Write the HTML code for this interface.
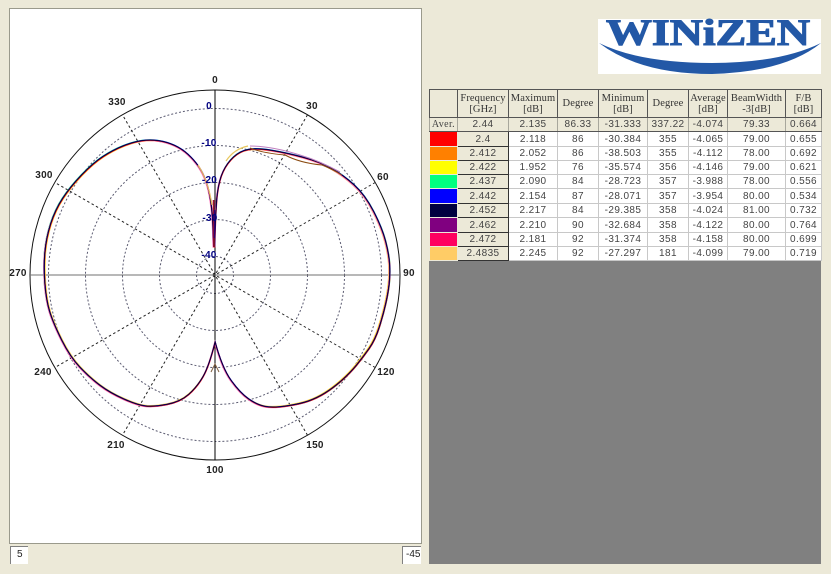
<!DOCTYPE html>
<html>
<head>
<meta charset="utf-8">
<style>
html,body{margin:0;padding:0}
body{width:831px;height:574px;background:#ece9d8;position:relative;overflow:hidden;font-family:"Liberation Sans",sans-serif}
#plot{position:absolute;left:9px;top:8px;width:411px;height:534px;background:#fff;border:1px solid #9a9a8c}
svg{position:absolute;left:0;top:0}
.box{position:absolute;background:#fff;border-left:1px solid #808080;border-top:1px solid #808080;font-size:10px;line-height:16px;color:#222;box-sizing:border-box;height:18px;top:546px}
#gray{position:absolute;left:429px;top:89px;width:392px;height:475px;background:#808080}
table{position:absolute;left:429px;top:89px;border-collapse:collapse;table-layout:fixed;width:392px;background:#fff}
td{padding:0;text-align:center;border:1px solid #c8c8c8;font-size:10px;letter-spacing:.4px;color:#444;line-height:11px;overflow:hidden;white-space:nowrap}
tr.h td{background:#ece9d8;border-color:#555;font-family:"Liberation Serif",serif;font-size:10.5px;line-height:11px;letter-spacing:.1px;color:#333}
tr.a td{background:#ece9d8;border-color:#555 #a8a79c #555 #a8a79c;color:#444}
td.f{background:#ece9d8;border:1px solid #333}
td.c{border:1px solid #ece9d8}
</style>
</head>
<body>
<div id="plot"></div>
<svg width="831" height="574" viewBox="0 0 831 574">
<defs>
<path id="p" fill="none" d="M213.5,247 L213,231 Q212.5,215 210.75,202.5 Q209,190 206,181.5 Q203,173 198.5,166.5 Q194,160 188,154.5 Q182,149 174.5,145.5 Q167,142 158.5,140.75 Q150,139.5 141.5,140.75 Q133,142 123,146 Q113,150 103,156.5 Q93,163 81.5,175 Q70,187 62.5,198.5 Q55,210 50.5,224 Q46,238 44.75,252.5 Q43.5,267 44.75,283.5 Q46,300 49.5,311.5 Q53,323 61.5,340 Q70,357 80,367.5 Q90,378 100,385.5 Q110,393 123.5,399 Q137,405 145,406 Q153,407 166.5,404.5 Q180,402 188.5,394.5 Q197,387 203,376.5 Q209,366 215,342 Q222,368 231,380.5 Q240,393 248.5,399 Q257,405 265,406.5 Q273,408 286.5,406 Q300,404 308.5,401 Q317,398 325,393 Q333,388 341.5,380.5 Q350,373 356.5,365 Q363,357 369,348.5 Q375,340 379,327.5 Q383,315 385.5,304 Q388,293 389,284 Q390,275 389.5,265 Q389,255 385.5,241.5 Q382,228 373.5,211.5 Q365,195 354,185 Q343,175 331.5,168.5 Q320,162 303.5,157.5 Q287,153 272,150.5 Q257,148 248.5,149.5 Q240,151 233.5,157 Q227,163 223,171.5 Q219,180 217.25,193.5 Q215.5,207 214.5,247"/>
</defs>
<g fill="none" stroke="#40405a" stroke-width="1" stroke-dasharray="2 2" opacity=".85">
<circle cx="215" cy="275" r="18.5"/>
<circle cx="215" cy="275" r="55.5"/>
<circle cx="215" cy="275" r="92.5"/>
<circle cx="215" cy="275" r="129.5"/>
<circle cx="215" cy="275" r="166.5"/>
</g>
<g stroke="#222" stroke-width="1" stroke-dasharray="2.5 2.5">
<line x1="307.5" y1="114.8" x2="122.5" y2="435.2"/>
<line x1="375.2" y1="182.5" x2="54.8" y2="367.5"/>
<line x1="375.2" y1="367.5" x2="54.8" y2="182.5"/>
<line x1="307.5" y1="435.2" x2="122.5" y2="114.8"/>
</g>
<circle cx="215" cy="275" r="185" fill="none" stroke="#111" stroke-width="1"/>
<line x1="215" y1="90" x2="215" y2="460" stroke="#000" stroke-width="1"/>
<line x1="30" y1="275" x2="400" y2="275" stroke="#707070" stroke-width="1"/>
<g stroke-width="1">
<use href="#p" stroke="#ffd070" transform="translate(215 275) scale(.994) translate(-215 -275)"/>
<use href="#p" stroke="#ffff00" transform="translate(215 275) scale(.996) translate(-215 -275)"/>
<use href="#p" stroke="#ff8000" transform="translate(215 275) scale(.998) translate(-215 -275)"/>
<use href="#p" stroke="#00e080" transform="translate(215 275) scale(1.003) translate(-215 -275)"/>
<use href="#p" stroke="#ff80c0" transform="translate(-.5 .6)"/>
<use href="#p" stroke="#ff0000" transform="translate(.4 .3)"/>
<use href="#p" stroke="#0000ff" transform="translate(.2 -.3)"/>
<use href="#p" stroke="#800080"/>
<use href="#p" stroke="#000030" stroke-width=".9" transform="translate(.1 -.1)"/>
</g>
<path d="M250,148 Q262,153 285,155 Q300,163 322,165 Q332,169 342,175" fill="none" stroke="#8a4a10" stroke-width="1"/>
<path d="M250,146 Q272,146 300,155 Q320,161 340,172" fill="none" stroke="#c080c0" stroke-width="1"/>
<path d="M226,161 Q234,149 248,146" fill="none" stroke="#e8c860" stroke-width="1.2"/>
<path d="M212,205 Q208,180 198,165" fill="none" stroke="#e8b860" stroke-width="1.2"/>
<path d="M211,372 L215,364 L219,372" fill="none" stroke="#806040" stroke-width="1"/>
<path d="M213.5,200 L214,247" stroke="#a01030" stroke-width="1.6" fill="none"/>
<path d="M214.5,210 L214.5,238" stroke="#300070" stroke-width="1.4" fill="none"/>
<g font-family="'Liberation Sans',sans-serif" font-size="10" font-weight="bold" fill="#222" text-anchor="middle" letter-spacing=".3">
<text x="215" y="83">0</text>
<text x="312" y="109">30</text>
<text x="383" y="180">60</text>
<text x="409" y="276">90</text>
<text x="386" y="375">120</text>
<text x="315" y="448">150</text>
<text x="215" y="473">100</text>
<text x="116" y="448">210</text>
<text x="43" y="375">240</text>
<text x="18" y="276">270</text>
<text x="44" y="178">300</text>
<text x="117" y="105">330</text>
</g>
<g font-family="'Liberation Sans',sans-serif" font-size="10" font-weight="bold" fill="#000080" text-anchor="middle" letter-spacing=".3">
<text x="209" y="109">0</text>
<text x="209" y="146">-10</text>
<text x="209.5" y="183">-20</text>
<text x="210" y="221">-30</text>
<text x="209" y="258">-40</text>
</g>
<rect x="598" y="19" width="223" height="55" fill="#fff"/>
<text x="606" y="45" font-family="'Liberation Serif',serif" font-weight="bold" font-size="37" fill="#2358a6" stroke="#2358a6" stroke-width="1.1" textLength="204" lengthAdjust="spacingAndGlyphs">WINiZEN</text>
<path d="M599,43 Q640,74 712,74 Q785,72 821,43 Q780,63 712,63 Q640,63 599,43 Z" fill="#2358a6"/>
</svg>
<div class="box" style="left:10px;width:18px;padding-left:6px">5</div>
<div class="box" style="left:402px;width:19px;padding-left:3px">-45</div>
<div id="gray"></div>
<table>
<colgroup><col style="width:28px"><col style="width:51px"><col style="width:49px"><col style="width:41px"><col style="width:49px"><col style="width:41px"><col style="width:39px"><col style="width:58px"><col style="width:36px"></colgroup>
<tr class="h" style="height:28px"><td></td><td>Frequency<br>[GHz]</td><td>Maximum<br>[dB]</td><td>Degree</td><td>Minimum<br>[dB]</td><td>Degree</td><td>Average<br>[dB]</td><td>BeamWidth<br>-3[dB]</td><td>F/B<br>[dB]</td></tr>
<tr class="a" style="height:14px"><td style="font-family:'Liberation Serif',serif">Aver.</td><td>2.44</td><td>2.135</td><td>86.33</td><td>-31.333</td><td>337.22</td><td>-4.074</td><td>79.33</td><td>0.664</td></tr>
<tr style="height:15px"><td class="c" style="background:#ff0000"></td><td class="f">2.4</td><td>2.118</td><td>86</td><td>-30.384</td><td>355</td><td>-4.065</td><td>79.00</td><td>0.655</td></tr>
<tr style="height:14px"><td class="c" style="background:#ff8000"></td><td class="f">2.412</td><td>2.052</td><td>86</td><td>-38.503</td><td>355</td><td>-4.112</td><td>78.00</td><td>0.692</td></tr>
<tr style="height:14px"><td class="c" style="background:#ffff00"></td><td class="f">2.422</td><td>1.952</td><td>76</td><td>-35.574</td><td>356</td><td>-4.146</td><td>79.00</td><td>0.621</td></tr>
<tr style="height:14px"><td class="c" style="background:#00ff80"></td><td class="f">2.437</td><td>2.090</td><td>84</td><td>-28.723</td><td>357</td><td>-3.988</td><td>78.00</td><td>0.556</td></tr>
<tr style="height:15px"><td class="c" style="background:#0000ff"></td><td class="f">2.442</td><td>2.154</td><td>87</td><td>-28.071</td><td>357</td><td>-3.954</td><td>80.00</td><td>0.534</td></tr>
<tr style="height:14px"><td class="c" style="background:#000040"></td><td class="f">2.452</td><td>2.217</td><td>84</td><td>-29.385</td><td>358</td><td>-4.024</td><td>81.00</td><td>0.732</td></tr>
<tr style="height:15px"><td class="c" style="background:#800080"></td><td class="f">2.462</td><td>2.210</td><td>90</td><td>-32.684</td><td>358</td><td>-4.122</td><td>80.00</td><td>0.764</td></tr>
<tr style="height:14px"><td class="c" style="background:#ff0060"></td><td class="f">2.472</td><td>2.181</td><td>92</td><td>-31.374</td><td>358</td><td>-4.158</td><td>80.00</td><td>0.699</td></tr>
<tr style="height:14px"><td class="c" style="background:#ffcc66"></td><td class="f">2.4835</td><td>2.245</td><td>92</td><td>-27.297</td><td>181</td><td>-4.099</td><td>79.00</td><td>0.719</td></tr>
</table>
</body>
</html>
